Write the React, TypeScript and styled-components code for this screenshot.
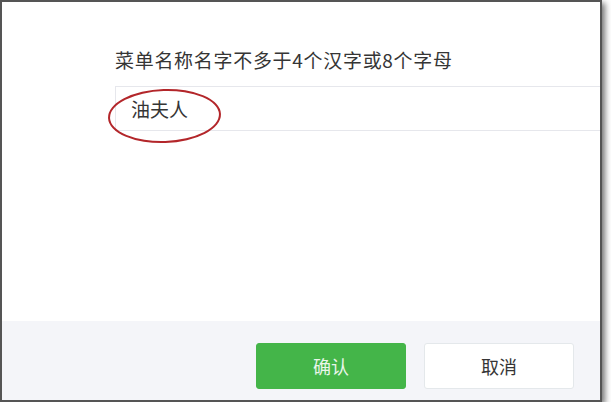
import styled, { createGlobalStyle } from 'styled-components';

const GlobalStyle = createGlobalStyle`
  html, body {
    margin: 0;
    padding: 0;
    background: #ffffff;
  }
  body {
    font-family: "Noto Sans CJK SC", "Noto Sans", sans-serif;
  }
`;

const Frame = styled.div`
  width: 598px;
  height: 398px;
  border: 2px solid #555555;
  box-shadow: 3px 3px 6px rgba(0, 0, 0, 0.55);
  display: flex;
  flex-direction: column;
  overflow: hidden;
  background: #ffffff;
`;

const Body = styled.div`
  flex: 1;
  padding: 45px 0 0 113px;
  display: flex;
  flex-direction: column;
  gap: 13px;
`;

const Label = styled.div`
  font-size: 19px;
  line-height: 26px;
  color: #353535;
  letter-spacing: 0.7px;
`;

const Field = styled.div`
  position: relative;
  width: 560px;
  height: 43px;
  border: 1px solid #e6e7ec;
  display: flex;
  align-items: center;
  padding-left: 15px;
  font-size: 19px;
  color: #353535;
`;

const Circle = styled.div`
  position: absolute;
  left: -8px;
  top: 2px;
  width: 109px;
  height: 50px;
  border: 2px solid #b3262a;
  border-radius: 50%;
  transform: rotate(-2deg);
`;

const Footer = styled.div`
  height: 79px;
  background: #f4f5f9;
  display: flex;
  justify-content: flex-end;
  align-items: flex-start;
  gap: 18px;
  padding: 22px 26px 0 0;
  box-sizing: border-box;
`;

const Button = styled.button<{ $primary?: boolean }>`
  width: 150px;
  height: 46px;
  border-radius: 3px;
  border: 1px solid ${(p) => (p.$primary ? '#44b549' : '#e4e8eb')};
  background: ${(p) => (p.$primary ? '#44b549' : '#ffffff')};
  color: ${(p) => (p.$primary ? '#eaf6ea' : '#353535')};
  font-family: "Noto Sans CJK SC", "Noto Sans", sans-serif;
  font-size: 18px;
  padding: 0;
`;

export default function App() {
  return (
    <>
      <GlobalStyle />
      <Frame>
        <Body>
          <Label>菜单名称名字不多于4个汉字或8个字母</Label>
          <Field>
            油夫人
            <Circle />
          </Field>
        </Body>
        <Footer>
          <Button $primary>确认</Button>
          <Button>取消</Button>
        </Footer>
      </Frame>
    </>
  );
}
